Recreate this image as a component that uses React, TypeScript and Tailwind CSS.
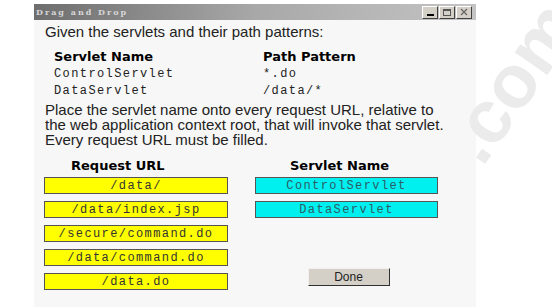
import React from 'react';

const urls = ['/data/', '/data/index.jsp', '/secure/command.do', '/data/command.do', '/data.do'];
const servlets = ['ControlServlet', 'DataServlet'];

const TitleButton = ({ kind }: { kind: 'min' | 'max' | 'close' }) => (
  <div className="w-[16px] h-[13px] bg-[#d4d0c8] border border-t-white border-l-white border-r-[#404040] border-b-[#404040] flex items-center justify-center">
    {kind === 'min' && <div className="w-[7px] h-[2px] bg-black mt-[6px]" />}
    {kind === 'max' && <div className="w-[8px] h-[7px] border border-[#555] border-t-2" />}
    {kind === 'close' && (
      <svg width="8" height="8" viewBox="0 0 8 8">
        <path d="M1 1L7 7M7 1L1 7" stroke="#666" strokeWidth="1.3" />
      </svg>
    )}
  </div>
);

const mono = "font-['Liberation_Mono',monospace] text-[12px] tracking-[1.4px]";

const App = () => {
  return (
    <div className="relative w-[552px] h-[307px] bg-white overflow-hidden font-['Liberation_Sans',Arial,sans-serif]">
      <div className="ml-[34px] mt-[4px] w-[442px] h-[303px] flex flex-col bg-[#f7f7f7]">
        <div className="h-[16px] flex items-center justify-between pl-[2px] pr-[4px] bg-gradient-to-r from-[#6e6e6e] via-[#a8a8a8] to-[#c4c4c4]">
          <span className="font-['DejaVu_Serif',serif] font-bold text-[8px] tracking-[2px] text-[#d8d8d8]">Drag and Drop</span>
          <div className="flex gap-[1px]">
            <TitleButton kind="min" />
            <TitleButton kind="max" />
            <TitleButton kind="close" />
          </div>
        </div>

        <div className="pl-[11px] pt-[4px] text-[#222]">
          <p className="text-[15px] leading-[16px]">Given the servlets and their path patterns:</p>

          <div className="mt-[9px] pl-[9px] grid grid-cols-[209px_1fr]">
            <div className="font-['DejaVu_Sans',sans-serif] font-bold text-[13px] leading-[16px] text-black">Servlet Name</div>
            <div className="font-['DejaVu_Sans',sans-serif] font-bold text-[13px] leading-[16px] text-black">Path Pattern</div>
            <div className={`${mono} leading-[17px] mt-[1px]`}>ControlServlet</div>
            <div className={`${mono} leading-[17px] mt-[1px]`}>*.do</div>
            <div className={`${mono} leading-[17px]`}>DataServlet</div>
            <div className={`${mono} leading-[17px]`}>/data/*</div>
          </div>

          <p className="mt-[2px] text-[15px] leading-[15px]">
            Place the servlet name onto every request URL, relative to
            <br />
            the web application context root, that will invoke that servlet.
            <br />
            Every request URL must be filled.
          </p>
        </div>

        <div className="mt-[11px] pl-[10px] flex gap-[27px]">
          <div className="w-[184px] flex flex-col">
            <div className="pl-[27px] font-['DejaVu_Sans',sans-serif] font-bold text-[13px] leading-[16px] text-black">Request URL</div>
            <div className="mt-[3px] flex flex-col gap-[7px]">
              {urls.map((u) => (
                <div key={u} className={`h-[17px] bg-[#ffff00] border border-[#555] flex items-center justify-center ${mono} text-[#333]`}>
                  {u}
                </div>
              ))}
            </div>
          </div>

          <div className="w-[183px] flex flex-col">
            <div className="pl-[35px] font-['DejaVu_Sans',sans-serif] font-bold text-[13px] leading-[16px] text-black">Servlet Name</div>
            <div className="mt-[3px] flex flex-col gap-[7px]">
              {servlets.map((s) => (
                <div key={s} className={`h-[17px] bg-[#00f0f0] border border-[#555] flex items-center justify-center ${mono} text-[#2d5c66]`}>
                  {s}
                </div>
              ))}
            </div>
            <div className="mt-[50px] self-center ml-[4px] w-[82px] h-[18px] bg-[#d4d0c8] border border-t-[#f0f0f0] border-l-[#f0f0f0] border-r-[#303030] border-b-[#303030] flex items-center justify-center text-[12px] text-[#222]">
              Done
            </div>
          </div>
        </div>
      </div>

      <div className="absolute left-[492px] top-[100px] -rotate-[55deg] origin-bottom-left font-['Liberation_Sans',Arial,sans-serif] font-bold text-[75px] leading-none text-[#ebebeb] pointer-events-none">
        .com
      </div>
    </div>
  );
};

export default App;
